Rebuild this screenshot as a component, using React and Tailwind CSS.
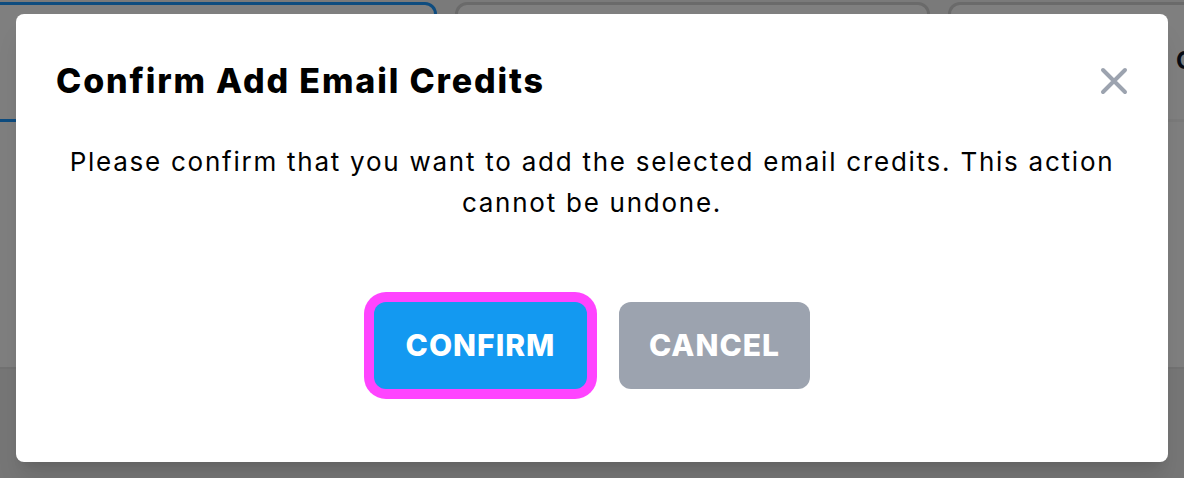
import React from "react";

const font = { fontFamily: "Inter, 'Noto Sans', sans-serif" };

const CloseIcon = () => (
  <svg width="28" height="28" viewBox="0 0 28 28" fill="none">
    <path d="M3 3L25 25M25 3L3 25" stroke="#9ca3af" strokeWidth="4" strokeLinecap="round" />
  </svg>
);

const ConfirmModal = () => {
  return (
    <div className="w-[1152px] rounded-lg bg-white px-10 pt-[47px] pb-[73px] shadow-xl">
      <div className="flex items-center justify-between">
        <h2 className="text-[34px] font-extrabold leading-[40px] tracking-[1.85px] text-black">
          Confirm Add Email Credits
        </h2>
        <button className="flex items-center justify-center">
          <CloseIcon />
        </button>
      </div>

      <p className="mx-auto mt-10 w-[1072px] text-center text-[26px] leading-[41px] tracking-[1.75px] text-black">
        Please confirm that you want to add the selected email credits. This action cannot be undone.
      </p>

      <div className="mt-[79px] flex justify-center gap-8">
        <button className="h-[87px] w-[213px] rounded-xl bg-[#1399f1] text-[30px] font-extrabold tracking-[1px] text-white ring-[10px] ring-[#ff44ff]">
          CONFIRM
        </button>
        <button className="h-[87px] w-[191px] rounded-xl bg-[#9ca3af] text-[30px] font-extrabold tracking-[1px] text-white">
          CANCEL
        </button>
      </div>
    </div>
  );
};

export default function App() {
  return (
    <div className="relative h-[478px] w-[1184px] overflow-hidden bg-[#f4f4f4]" style={font}>
      {/* page behind the dialog */}
      <div className="-ml-4 flex gap-[18px] pt-[2px]">
        <div className="h-[120px] w-[453px] shrink-0 rounded-xl border-[3px] border-[#1c98ff] bg-white" />
        <div className="h-[120px] w-[475px] shrink-0 rounded-xl border-[3px] border-[#d4d4d4] bg-white" />
        <div className="h-[117px] w-[260px] shrink-0 rounded-t-xl border-x-[3px] border-t-[3px] border-[#d4d4d4] bg-white pl-[225px] pt-[44px]">
          <span className="text-[24px] font-bold leading-none text-[#0f172a]">C</span>
        </div>
      </div>
      <div className="h-[245px] bg-white" />
      <div className="h-[120px] border-t-2 border-[#e5e5e5] bg-[#ececec]" />

      {/* overlay */}
      <div className="absolute inset-0 bg-black/50" />
      <div className="absolute left-4 top-[14px]">
        <ConfirmModal />
      </div>
    </div>
  );
}
